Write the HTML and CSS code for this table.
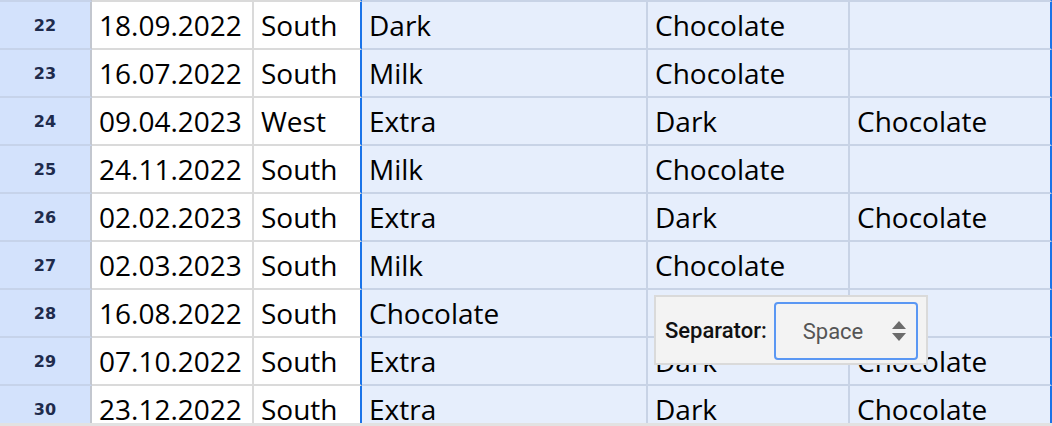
FILE: index.html
```html
<!DOCTYPE html>
<html>
<head>
<meta charset="utf-8">
<link rel="stylesheet" href="styles.css">
</head>
<body>
<div class="sheet">
  <div class="rows">
    <div class="row edge"><div class="rh"></div><div class="c"></div><div class="c reg"></div><div class="c s"></div><div class="c s"></div><div class="c s last"></div></div>
    <div class="row"><div class="rh">22</div><div class="c">18.09.2022</div><div class="c reg">South</div><div class="c s">Dark</div><div class="c s">Chocolate</div><div class="c s last"></div></div>
    <div class="row"><div class="rh">23</div><div class="c">16.07.2022</div><div class="c reg">South</div><div class="c s">Milk</div><div class="c s">Chocolate</div><div class="c s last"></div></div>
    <div class="row"><div class="rh">24</div><div class="c">09.04.2023</div><div class="c reg">West</div><div class="c s">Extra</div><div class="c s">Dark</div><div class="c s last">Chocolate</div></div>
    <div class="row"><div class="rh">25</div><div class="c">24.11.2022</div><div class="c reg">South</div><div class="c s">Milk</div><div class="c s">Chocolate</div><div class="c s last"></div></div>
    <div class="row"><div class="rh">26</div><div class="c">02.02.2023</div><div class="c reg">South</div><div class="c s">Extra</div><div class="c s">Dark</div><div class="c s last">Chocolate</div></div>
    <div class="row"><div class="rh">27</div><div class="c">02.03.2023</div><div class="c reg">South</div><div class="c s">Milk</div><div class="c s">Chocolate</div><div class="c s last"></div></div>
    <div class="row"><div class="rh">28</div><div class="c">16.08.2022</div><div class="c reg">South</div><div class="c s">Chocolate</div><div class="c s"></div><div class="c s last"></div></div>
    <div class="row"><div class="rh">29</div><div class="c">07.10.2022</div><div class="c reg">South</div><div class="c s">Extra</div><div class="c s">Dark</div><div class="c s last">Chocolate</div></div>
    <div class="row"><div class="rh">30</div><div class="c">23.12.2022</div><div class="c reg">South</div><div class="c s">Extra</div><div class="c s">Dark</div><div class="c s last">Chocolate</div></div>
  </div>
  <div class="popup">
    <span class="label">Separator:</span>
    <div class="select">
      <span class="value">Space</span>
      <svg class="arrows" width="14" height="20" viewBox="0 0 14 20"><path d="M7 0 L14 8 L0 8 Z" fill="#6b6b6b"/><path d="M0 12 L14 12 L7 20 Z" fill="#6b6b6b"/></svg>
    </div>
  </div>
</div>
</body>
</html>
```

FILE: styles.css
```css
html, body {
  margin: 0;
  padding: 0;
  background: #ffffff;
}

.sheet {
  position: relative;
  width: 1052px;
  height: 426px;
  box-sizing: border-box;
  border-bottom: 3px solid #e2e2e2;
  overflow: hidden;
}

.rows {
  display: flex;
  flex-direction: column;
}

.row {
  display: grid;
  grid-template-columns: 92px 162px 108px 286px 202px 202px;
  height: 48px;
  flex: none;
}

.row.edge {
  height: 2px;
}

.row > div {
  box-sizing: border-box;
  border-right: 2px solid #dadada;
  border-bottom: 2px solid #dadada;
  display: flex;
  align-items: center;
  padding-left: 7px;
  font-family: "Open Sans", "Noto Sans", sans-serif;
  font-size: 28px;
  color: #000;
  white-space: nowrap;
  overflow: hidden;
}

.row > .rh {
  background: #d3e2fc;
  border-right-color: #c3c7cf;
  border-bottom-color: #c6d3ea;
  justify-content: center;
  padding-left: 0;
  font-family: "DejaVu Sans", Verdana, sans-serif;
  font-weight: bold;
  font-size: 16px;
  color: #1e2b4c;
}

.row > .reg {
  border-right-color: #1a73e8;
}

.row > .s {
  background: #e6eefc;
  border-right-color: #c8d3e6;
  border-bottom-color: #c8d3e6;
}

.row > .s.last {
  border-right-color: #1a73e8;
}

.popup {
  position: absolute;
  left: 654px;
  top: 295px;
  width: 274px;
  height: 70px;
  box-sizing: border-box;
  border: 2px solid #dadada;
  background: #f3f3f3;
  display: flex;
  align-items: center;
  padding-left: 9px;
}

.label {
  font-family: Roboto, sans-serif;
  font-weight: 500;
  font-size: 22px;
  color: #111;
  margin-right: 7px;
}

.select {
  width: 144px;
  height: 58px;
  box-sizing: border-box;
  border: 2px solid #5a97f3;
  border-radius: 4px;
  background: #f3f3f3;
  display: flex;
  align-items: center;
  padding-left: 27px;
  padding-right: 10px;
  margin-top: 2px;
}

.value {
  font-family: Roboto, sans-serif;
  font-size: 22px;
  color: #555;
}

.arrows {
  margin-left: auto;
  display: block;
}
```
